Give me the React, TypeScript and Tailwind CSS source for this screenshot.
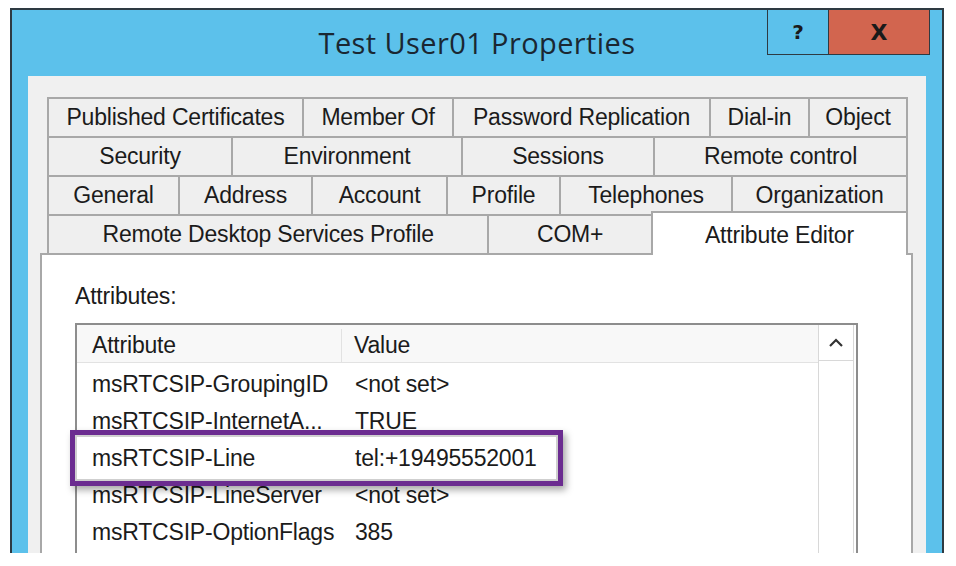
const tabRows = [
  [
    { label: 'Published Certificates', w: 'w-[255px]' },
    { label: 'Member Of', w: 'w-[150px]' },
    { label: 'Password Replication', w: 'w-[257px]' },
    { label: 'Dial-in', w: 'w-[99px]' },
    { label: 'Object', w: 'w-[100px]' },
  ],
  [
    { label: 'Security', w: 'w-[184px]' },
    { label: 'Environment', w: 'w-[230px]' },
    { label: 'Sessions', w: 'w-[192px]' },
    { label: 'Remote control', w: 'w-[255px]' },
  ],
  [
    { label: 'General', w: 'w-[131px]' },
    { label: 'Address', w: 'w-[133px]' },
    { label: 'Account', w: 'w-[135px]' },
    { label: 'Profile', w: 'w-[113px]' },
    { label: 'Telephones', w: 'w-[172px]' },
    { label: 'Organization', w: 'w-[177px]' },
  ],
]

const rows = [
  { name: 'msRTCSIP-GroupingID', value: '<not set>' },
  { name: 'msRTCSIP-InternetA...', value: 'TRUE' },
  { name: 'msRTCSIP-Line', value: 'tel:+19495552001', marked: true },
  { name: 'msRTCSIP-LineServer', value: '<not set>' },
  { name: 'msRTCSIP-OptionFlags', value: '385' },
]

function Tab({ label, w, last }: { label: string; w: string; last?: boolean }) {
  return (
    <div
      className={`${w} flex h-[39px] items-center justify-center border-t-2 border-l-2 border-[#a8a8a8] bg-[#efefef] ${
        last ? 'border-r-2' : ''
      }`}
    >
      {label}
    </div>
  )
}

export default function App() {
  return (
    <div className="h-[566px] w-[956px] overflow-hidden bg-white pt-[8px] pl-[10px] font-['Liberation_Sans',Arial,sans-serif] text-[23px] tracking-[-0.2px] text-[#1b1b1b]">
      <div className="flex h-[545px] w-[934px] flex-col overflow-hidden border-x-2 border-t-2 border-[#2e3a42] bg-[#5cc1eb]">
        {/* title bar */}
        <div className="grid h-[66px] shrink-0 grid-cols-[175px_1fr_175px]">
          <div />
          <div className="flex items-center justify-center font-['Open_Sans','Noto_Sans',sans-serif] text-[29px] tracking-[0.4px] text-[#1a2732]">
            Test User01 Properties
          </div>
          <div className="flex items-start justify-end pr-[12px]">
            <div className="flex h-[45px] w-[62px] items-center justify-center border-x border-b border-[#2e3a42] font-['DejaVu_Sans',sans-serif] text-[20px] font-bold text-[#1a1a1a]">
              ?
            </div>
            <div className="flex h-[45px] w-[101px] items-center justify-center border-r border-b border-[#2e3a42] bg-[#d2654f] font-['DejaVu_Sans',sans-serif] text-[22px] font-bold text-[#1a1a1a]">
              X
            </div>
          </div>
        </div>

        {/* dialog body */}
        <div className="mx-[16px] flex flex-1 flex-col bg-[#f0f0f0] pt-[21px]">
          <div className="ml-[19px] w-[861px]">
            {tabRows.map((row, i) => (
              <div key={i} className="flex">
                {row.map((t, j) => (
                  <Tab key={t.label} label={t.label} w={t.w} last={j === row.length - 1} />
                ))}
              </div>
            ))}
            <div className="-mt-[3px] flex items-end">
              <Tab label="Remote Desktop Services Profile" w="w-[442px]" />
              <Tab label="COM+" w="w-[164px]" />
              <div className="relative z-10 -mb-[2px] flex h-[44px] w-[258px] justify-center border-x-2 border-t-2 border-[#a8a8a8] bg-white pt-[5px]">
                Attribute Editor
              </div>
            </div>
          </div>

          {/* tab page */}
          <div className="ml-[12px] flex w-[873px] flex-1 flex-col border-x-2 border-t-2 border-[#a8a8a8] bg-white pt-[29px] pl-[33px]">
            <div className="leading-[25px]">Attributes:</div>
            <div className="mt-[14px] flex w-[783px] flex-1 border-x-2 border-t-2 border-[#8d8d8d]">
              <div className="flex w-[741px] flex-col">
                <div className="flex h-[38px] shrink-0 items-center border-b border-[#e2e2e2] bg-[#f8f8f8] pt-[4px]">
                  <div className="flex h-full w-[265px] items-center border-r border-[#e2e2e2] pl-[15px]">Attribute</div>
                  <div className="pl-[12px]">Value</div>
                </div>
                <div className="pt-[3px]">
                  {rows.map((r) => (
                    <div
                      key={r.name}
                      className={`flex h-[37px] items-center ${r.marked ? 'relative z-10' : ''}`}
                    >
                      {r.marked && (
                        <div className="absolute -top-[10px] -left-[7px] h-[56px] w-[493px] border-[5px] border-[#6b2c90] bg-white shadow-[3px_4px_7px_rgba(0,0,0,0.35),inset_0_0_0_2px_#cfcfcf]" />
                      )}
                      <div className="relative w-[265px] pl-[15px] whitespace-nowrap">{r.name}</div>
                      <div className="relative pl-[13px]">{r.value}</div>
                    </div>
                  ))}
                </div>
              </div>
              <div className="mr-[2px] flex w-[36px] flex-col border-x border-[#d8d8d8]">
                <div className="flex h-[36px] items-center justify-center border-b border-[#d8d8d8]">
                  <svg width="16" height="10" viewBox="0 0 16 10">
                    <polyline points="2,8 8,2 14,8" fill="none" stroke="#333" strokeWidth="2.2" />
                  </svg>
                </div>
              </div>
            </div>
          </div>
        </div>
      </div>
    </div>
  )
}
